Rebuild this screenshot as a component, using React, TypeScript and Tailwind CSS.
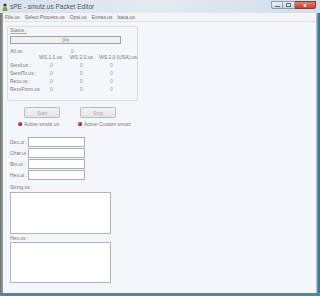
import React from "react";

const rows = ["Send.us :", "SendTo.us :", "Recv.us :", "RecvFrom.us"];
const fields = ["Dec.ui :", "Char.ui :", "Bin.ui :", "Hex.ui :"];

function Dot() {
    return (
        <span className="w-[4px] h-[4px] rounded-full bg-[radial-gradient(circle_at_35%_35%,#e88_0%,#a11_45%,#400_100%)]" />
    );
}

export default function App() {
    return (
        <div className="w-[320px] h-[296px] flex flex-col overflow-hidden whitespace-nowrap font-['Liberation_Sans',Arial,sans-serif] text-[5px] text-[#777] bg-[#dfe7ef]">
            {/* title bar */}
            <div className="h-[13px] flex items-center pl-[2px] bg-gradient-to-r from-[#d8e2ec] via-[#e3eaf2] to-[#d3dee9]">
                <svg width="6" height="8" viewBox="0 0 6 8">
                    <circle cx="3" cy="2" r="1.6" fill="#3a3a2a" />
                    <path d="M0.5 8 L1 4.5 Q3 3.5 5 4.5 L5.5 8 Z" fill="#7fa03a" />
                </svg>
                <span className="ml-[2px] text-[6.5px] text-[#555] leading-[7px]">sPE - smutz.us Packet Editor</span>
                <div className="ml-auto mr-[4px] flex h-[8px] mb-[4px]">
                    <div className="w-[12px] border border-[#8a9aae] bg-gradient-to-b from-[#eef2f7] to-[#c9d5e2] rounded-bl-[2px] flex items-end justify-center pb-[1px]">
                        <div className="w-[5px] h-[1px] bg-[#5d6d80]" />
                    </div>
                    <div className="w-[12px] border-y border-r border-[#8a9aae] bg-gradient-to-b from-[#eef2f7] to-[#c9d5e2] flex items-center justify-center">
                        <div className="w-[5px] h-[4px] border border-[#5d6d80]" />
                    </div>
                    <div className="w-[21px] border-y border-r border-[#8a3a30] bg-gradient-to-b from-[#e0806e] to-[#c2412e] rounded-br-[2px] flex items-center justify-center text-white text-[6px] leading-[6px] font-bold">
                        x
                    </div>
                </div>
            </div>

            <div className="flex flex-1">
                <div className="w-[3px] bg-gradient-to-r from-[#6d756f] to-[#9aa39d]" />

                <div className="flex-1 flex flex-col">
                    {/* menu bar */}
                    <div className="h-[9px] flex items-center gap-[5px] pl-[2px] bg-[#f2f4f6] border-b border-[#dde2e8] text-[#666] leading-[6px]">
                        <span>File.us</span>
                        <span>Select Process.us</span>
                        <span>Opsi.us</span>
                        <span>Extras.us</span>
                        <span>baca.us</span>
                    </div>

                    <div className="flex-1 bg-[#f3f6fb] pl-[4px] pt-[4px]">
                        {/* status group */}
                        <div className="w-[131px] h-[75px] border border-[#d8dde5] rounded-[2px] pl-[2px] flex flex-col">
                            <div className="h-[7px] leading-[7px] underline decoration-[#aaa]">Status :</div>
                            <div className="mt-[2px] w-[111px] h-[8px] border border-[#9ea3a8] bg-[#eef0f2] flex items-center justify-center leading-[6px] text-[#888]">
                                0%
                            </div>
                            <div className="mt-[4px] h-[6px] flex items-center leading-[6px]">
                                <span className="w-[61px]">All.us</span>
                                <span className="text-[#999]">0</span>
                            </div>
                            <div className="h-[6px] flex items-center leading-[6px]">
                                <span className="w-[29px]" />
                                <span className="w-[31px]">WS 1.1.us</span>
                                <span className="w-[29px]">WS 2.0.us</span>
                                <span>WS 2.0 (USA).us</span>
                            </div>
                            <div className="mt-[1px] flex flex-col">
                                {rows.map((r) => (
                                    <div key={r} className="h-[8px] flex items-center leading-[8px]">
                                        <span className="w-[40px]">{r}</span>
                                        <span className="w-[30px] text-[#999]">0</span>
                                        <span className="w-[30px] text-[#999]">0</span>
                                        <span className="text-[#999]">0</span>
                                    </div>
                                ))}
                            </div>
                        </div>

                        {/* buttons */}
                        <div className="mt-[6px] flex">
                            <div className="ml-[17px] w-[36px] h-[11px] border border-[#b9bcbf] rounded-[2px] bg-gradient-to-b from-[#f4f4f4] to-[#e4e4e4] flex items-center justify-center text-[#aaa] leading-[6px]">
                                Start
                            </div>
                            <div className="ml-[20px] w-[36px] h-[11px] border border-[#b9bcbf] rounded-[2px] bg-gradient-to-b from-[#f4f4f4] to-[#e4e4e4] flex items-center justify-center text-[#aaa] leading-[6px]">
                                Stop
                            </div>
                        </div>

                        {/* active */}
                        <div className="mt-[3px] h-[6px] flex items-center leading-[6px]">
                            <span className="ml-[11px]" />
                            <Dot />
                            <span className="ml-[2px] w-[54px]">Active smutz.us</span>
                            <Dot />
                            <span className="ml-[2px]">Active Custom smutz</span>
                        </div>

                        {/* converters */}
                        <div className="mt-[10px] flex flex-col gap-[1px]">
                            {fields.map((f) => (
                                <div key={f} className="flex items-center">
                                    <span className="ml-[3px] w-[18px] leading-[6px]">{f}</span>
                                    <div className="w-[57px] h-[10px] border border-[#a9aeb4] bg-white" />
                                </div>
                            ))}
                        </div>

                        <div className="mt-[4px] ml-[3px] h-[6px] leading-[6px]">String.us :</div>
                        <div className="mt-[2px] ml-[3px] w-[101px] h-[42px] border border-[#b0b4b9] bg-white" />
                        <div className="mt-[1px] ml-[3px] h-[6px] leading-[6px]">Hex.us :</div>
                        <div className="mt-[1px] ml-[3px] w-[101px] h-[41px] border border-[#b0b4b9] bg-white" />
                    </div>
                </div>

                <div className="w-[4px] bg-gradient-to-r from-[#c8d6e2] via-[#4f7f9c] to-[#3e6f8e]" />
            </div>

            <div className="h-[3px] bg-[#4a8aa2]" />
        </div>
    );
}
